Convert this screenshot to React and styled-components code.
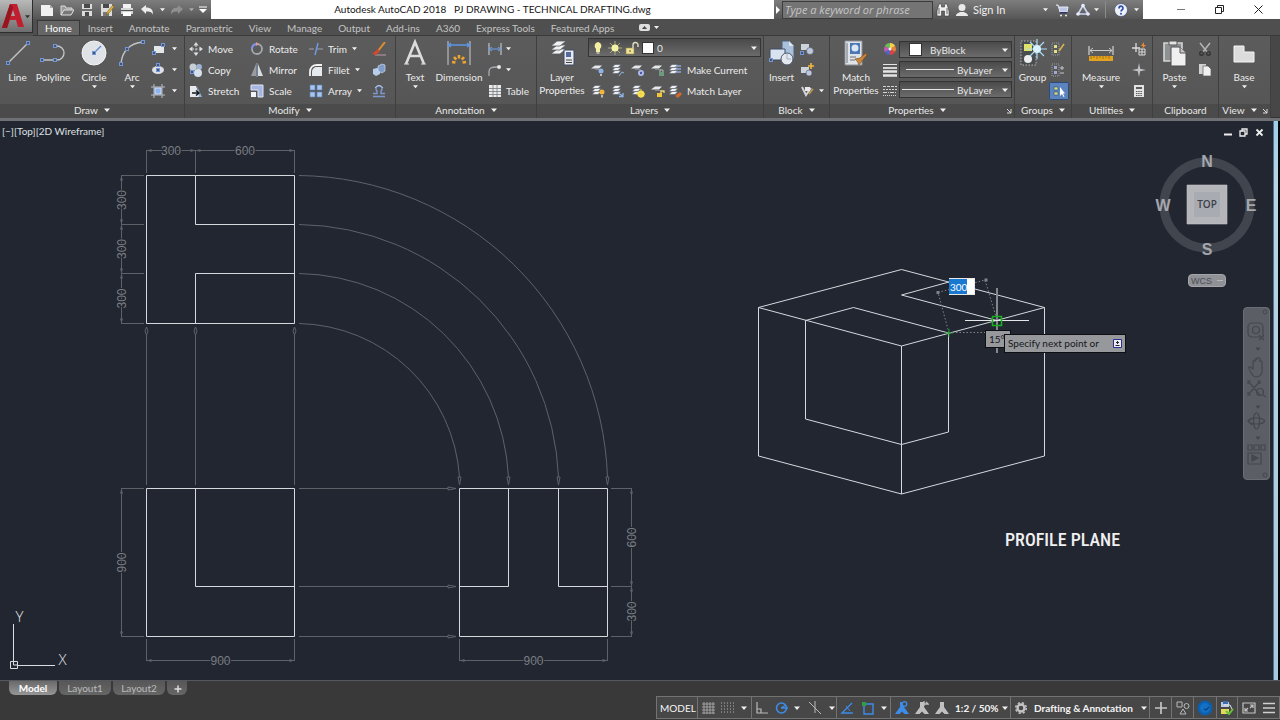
import styled, { createGlobalStyle, css } from 'styled-components'

const GlobalStyle = createGlobalStyle`
  *{box-sizing:border-box;}
  body{margin:0;background:#393939;font-family:Lato,"Open Sans",sans-serif;font-size:10px;color:#e8e8e8;}
  button,input,select{font:inherit;color:inherit;margin:0;padding:0;border:none;background:none;outline:none;}
  svg{display:block;flex:none;}
`

const Page = styled.div`display:flex;flex-direction:column;min-height:100vh;overflow:hidden;`

/* ---------- header ---------- */
const Header = styled.header`display:flex;height:36px;background:#4f4f4f;`
const AppButton = styled.button`
  width:33px;height:33px;display:flex;align-items:center;justify-content:center;gap:1px;
  background:linear-gradient(#b9b9b9,#6e6e6e);border:1px solid #2e2e2e;border-top:none;border-left:none;
`
const HeaderMain = styled.div`flex:1;min-width:0;display:flex;flex-direction:column;`
const TitleBar = styled.div`display:flex;height:19px;background:#fff;`
const QuickAccess = styled.div`
  width:178px;display:flex;align-items:center;padding-left:4px;
  background:linear-gradient(#7d7d7d,#565656);
`
const Title = styled.h1`
  flex:1;margin:0;text-align:center;font-size:10px;line-height:19px;font-weight:400;color:#151515;white-space:pre;
`
const InfoCenter = styled.div`
  display:flex;align-items:center;width:369px;background:linear-gradient(#7d7d7d,#565656);
`
const Search = styled.input`
  width:151px;height:18px;padding:0 2px;background:#747474;border:1px solid #3c3c3c;
  font-family:"Open Sans",sans-serif;font-size:11px;font-style:italic;
  &::placeholder{color:#c6c6c6;opacity:1;}
`
const WindowButtons = styled.div`
  width:137px;display:flex;justify-content:space-between;align-items:center;padding:0 12px 0 28px;
`
const IconButton = styled.button`
  width:${p => p.$w || 20}px;height:${p => p.$h || 19}px;flex:none;
  display:flex;align-items:center;justify-content:center;cursor:pointer;
`
const SignIn = styled.button`text-align:left;width:68px;padding-left:1px;color:#f0f0f0;font-size:11px;`
const Separator = styled.span`width:1px;height:17px;background:#8c8c8c;margin:0 4px;`

const TabRow = styled.nav`
  display:flex;align-items:flex-end;height:17px;padding-left:4px;border-bottom:1px solid #3a3a3a;
`
const Tab = styled.button`
  height:${p => p.$active ? 15 : 14}px;padding:0 8px;line-height:13px;white-space:nowrap;
  color:${p => p.$active ? '#fff' : '#c4c4c4'};
  ${p => p.$active && css`
    background:#666;border:1px solid #383838;border-bottom:none;padding:0 7px;
    border-radius:1px 1px 0 0;
  `}
`

/* ---------- ribbon ---------- */
const Ribbon = styled.div`
  display:flex;height:85px;padding-right:9px;background:#474747;
  border-bottom:3px solid #6e7073;box-shadow:inset 0 -1px #333;
`
const PanelBox = styled.section`
  flex:${p => p.$grow - 1} 1 0;min-width:0;display:flex;flex-direction:column;
  border-right:1px solid #3f3f3f;box-shadow:inset 1px 0 #626262;
`
const PanelBody = styled.div`flex:1;display:flex;padding-top:2px;background:linear-gradient(#5c5c5c,#565656);`
const PanelTitle = styled.button`
  position:relative;height:14px;display:flex;align-items:center;justify-content:center;gap:6px;
  padding:0 ${p => p.$launcher ? 10 : 0}px 2px 0;background:#4b4b4b;color:#e8e8e8;
`
const Launcher = styled.span`position:absolute;right:2px;top:4px;`
const BigButton = styled.button`
  width:${p => p.$w}px;height:64px;flex:none;display:flex;flex-direction:column;align-items:center;
  line-height:13px;color:#ececec;
`
const BigIcon = styled.span`height:33px;padding-top:1px;`
const Column = styled.div`
  width:${p => p.$w}px;flex:none;display:grid;grid-template-rows:repeat(3,21px);
  padding-left:${p => p.$pad || 0}px;
`
const Tool = styled.button`
  display:flex;align-items:center;gap:${p => p.$gap || 5}px;white-space:nowrap;color:#ececec;
  ${p => p.$active && css`
    background:#5b83bd;outline:1px solid #2e4a78;outline-offset:-1px;border-radius:1px;
    width:20px;height:18px;margin:2px 0 0 -2px;justify-content:center;
  `}
`
const LayerTools = styled.div`flex:1;display:grid;grid-template-rows:repeat(3,21px);min-width:0;padding:0 2px 0 1px;`
const ToolRow = styled.div`display:flex;align-items:center;`
const ComboRows = styled.div`flex:1;min-width:0;display:flex;flex-direction:column;gap:3px;padding:3px 2px 0 0;`
const Combo = styled.div`
  min-width:0;height:${p => p.$h || 17}px;flex:none;display:flex;align-items:center;gap:3px;
  padding:0 3px 0 ${p => p.$pad || 2}px;background:linear-gradient(#4a4a4a,#6b6b6b);border:1px solid #343434;
  select{flex:1;min-width:0;appearance:none;}
  option{color:#111;}
`
const Swatch = styled.span`
  width:${p => p.$size}px;height:${p => p.$size}px;flex:none;margin-right:${p => p.$after || 0}px;
  background:#fff;border:1px solid #333;
`
const LineSample = styled.span`width:${p => p.$w}px;height:1px;background:#e6e6e6;`

/* ---------- drawing area ---------- */
const Work = styled.main`flex:1;display:flex;min-height:559px;background:#222630;`
const Canvas = styled.div`position:relative;flex:1;min-width:0;overflow:hidden;`
const Drawing = styled.svg`position:absolute;inset:0;width:100%;height:100%;`
const Edge = styled.div`
  width:7px;border-right:2px solid #05070a;border-left:1px solid #55708a;
  background:linear-gradient(#9ed0ea,#b9d4e4 62px,#a9c9dc);
`
const ViewLabel = styled.div`position:absolute;left:2px;top:4px;line-height:13px;color:#dfe1e4;`
const DocButtons = styled.div`position:absolute;right:6px;top:2px;display:flex;`
const ViewCube = styled.div`position:absolute;right:11px;top:32px;`
const Wcs = styled.button`
  position:absolute;right:47px;top:153px;width:38px;height:13px;border-radius:4px;
  background:#8f9197;border:1px solid #a3a5aa;color:#4b4e55;display:flex;align-items:center;justify-content:center;gap:5px;
  font-family:"Liberation Sans",sans-serif;font-size:9px;
`
const NavBar = styled.div`
  position:absolute;right:3px;top:186px;width:27px;height:173px;border-radius:4px;
  background:#5b5e64;border:1px solid #6a6d73;
`
const LengthInput = styled.input`
  position:absolute;left:949px;top:157px;width:26px;height:17px;padding:0 1px;
  background:linear-gradient(90deg,#1979d1 18px,#fff 18px);color:#fff;border:1px solid #e8e8e8;border-left:none;line-height:14px;
`
const Tip = styled.div`
  position:absolute;display:flex;align-items:center;justify-content:space-between;
  background:#97989b;border:1px solid #0d0f14;color:#15171c;padding:0 3px 1px;
`
const AngleTip = styled(Tip)`left:985px;top:209px;width:26px;height:18px;`
const PromptTip = styled(Tip)`left:1004px;top:213px;width:122px;height:19px;`

/* ---------- bottom ---------- */
const Bottom = styled.footer`display:flex;flex-direction:column;height:40px;background:#393939;border-top:1px solid #55585c;`
const LayoutTabs = styled.div`display:flex;height:15px;padding-left:9px;gap:2px;`
const LayoutTab = styled.button`
  height:14px;width:${p => p.$w}px;line-height:13px;border-radius:0 0 6px 6px;
  background:${p => p.$active ? 'linear-gradient(#6a6a6a,#969696)' : 'linear-gradient(#575757,#666)'};
  color:${p => p.$active ? '#fff' : '#bcbcbc'};font-weight:${p => p.$active ? 700 : 400};
`
const StatusBar = styled.div`
  align-self:flex-end;display:flex;height:23px;background:#474747;border:1px solid #737373;
`
const Cell = styled.div`
  display:flex;align-items:center;border-right:1px solid #737373;
  &:last-child{border:none;}
`
const StatusText = styled.button`
  padding:0 3px;width:${p => p.$w}px;text-align:left;white-space:nowrap;
  font-weight:${p => p.$bold ? 700 : 400};color:#f4f4f4;
`

const Caret = ({ s = 6, c = '#f0f0f0' }) => (
  <svg width={s} height={s} viewBox="0 0 6 6"><path d="M0 1.500h6L3 5z" fill={c} /></svg>
)
const Icon = ({ s = 14, children }) => <svg width={s} height={s} viewBox="0 0 14 14" fill="none">{children}</svg>
const Big = ({ children }) => <svg width="28" height="28" viewBox="0 0 28 28" fill="none">{children}</svg>

// blue grip squares used on the draw tools
const Grip = ({ x, y }) => <rect x={x - 1.5} y={y - 1.5} width="3" height="3" fill="#46556f" stroke="#7396d8" strokeWidth="1" />

const Sheets = ({ x = 0, y = 0 }) => (
  <g transform={`translate(${x} ${y})`}>
    {[6, 3, 0].map(d => (
      <path key={d} d={`M1 ${d + 3.5}L4 ${d + 0.5}h6l-3 3z`} fill="#eceff2" stroke="#555b63" strokeWidth=".6" />
    ))}
  </g>
)

const big = {
  line: <Big><path d="M4 24L24 4" stroke="#bfc2c6" strokeWidth="1.4" /><Grip x={4} y={24} /><Grip x={24} y={4} /></Big>,
  polyline: <Big><path d="M3 21h15a6.500 6.500 0 0 0 0-14h-2" stroke="#bfc2c6" strokeWidth="1.4" /><Grip x={3} y={21} /><Grip x={16} y={21} /><Grip x={16} y={7} /></Big>,
  circle: (
    <Big>
      <circle cx="14" cy="14" r="12" fill="#dfe2e6" stroke="#f4f4f4" />
      <path d="M14 14l7-7" stroke="#5d86d3" strokeWidth="1.2" /><Grip x={14} y={14} />
    </Big>
  ),
  arc: <Big><path d="M3 25C4 12 12 4 25 3" stroke="#bfc2c6" strokeWidth="1.5" /><Grip x={3} y={25} /><Grip x={9} y={10} /><Grip x={25} y={3} /></Big>,
  text: <Big><path d="M5 25L14 3l9 22M8.500 17h11" stroke="#dcdcdc" strokeWidth="2.600" /><path d="M3 25h5M20 25h5" stroke="#dcdcdc" /></Big>,
  dimension: (
    <Big>
      <path d="M3 2v24M25 2v24" stroke="#a8abb0" strokeWidth="1.400" />
      <path d="M3 6h22M6 4L3 6l3 2M22 4l3 2-3 2" stroke="#5f97e6" strokeWidth="1.300" />
      {[[7, 23], [9, 18], [14, 16], [19, 18], [21, 23]].map(([x, y]) => <path key={x} d={`M${x} ${y}L14 24`} stroke="#eda52c" strokeWidth="2.600" strokeDasharray="3.500 9" />)}
    </Big>
  ),
  layers: (
    <Big>
      {[10, 6, 2].map(y => <path key={y} d={`M3 ${y + 5}l6-5h9l-6 5z`} fill="#f0f1f3" stroke="#55585c" strokeWidth=".8" />)}
      <path d="M16 11h10v15H16z" fill="#e7e9ee" stroke="#3f4a63" /><path d="M18 13h5v5h-5z" fill="#54699c" /><path d="M18 21h6M18 23.500h6" stroke="#444" />
    </Big>
  ),
  insert: (
    <Big>
      <path d="M14 2h7l5 5v13H14z" fill="#a9c0dc" stroke="#4c5f78" /><path d="M21 2v5h5" fill="#dde7f2" />
      <path d="M2 10h15v11H2z" fill="#d9e3f0" stroke="#3f4d63" /><circle cx="19" cy="20" r="6" fill="#e4e8ee" stroke="#50586a" />
      <path d="M19 20V15M19 20h4" stroke="#9fb0c8" /><Grip x={3} y={21} />
    </Big>
  ),
  match: (
    <Big>
      <path d="M3 2h17v24H3z" fill="#dfe3e8" stroke="#8a8f96" /><path d="M8 4h10v11H8z" fill="#4a78b5" /><circle cx="13" cy="9" r="3.500" fill="#dbe6f3" />
      <path d="M5 4v20M8 18h6M8 21h5" stroke="#6d7178" /><path d="M13 20l5-1 6-5 1 2-5 6-3 4c-1-3-2-4-4-6z" fill="#c8873d" stroke="#774313" strokeWidth=".6" />
    </Big>
  ),
  group: (
    <Big>
      <path d="M2 2h15v24H2z" stroke="#b2b5b8" strokeDasharray="1.500 1.500" fill="#4a4d50" />
      <rect x="5" y="5" width="8" height="7" fill="#dfe36d" /><circle cx="9" cy="20" r="4" fill="#eceef0" />
      <path d="M18 0v20M8 10h20M11 3l14 14M25 3L11 17" stroke="#a8dcf7" strokeWidth="1.200" /><circle cx="18" cy="10" r="4" fill="#d8f3ff" />
    </Big>
  ),
  measure: (
    <Big>
      <path d="M2 7v9M26 7v9" stroke="#c9c9c9" strokeWidth="1.300" /><path d="M3 11.500h22M6 9l-3 2.500L6 14M22 9l3 2.500-3 2.500" stroke="#c9c9c9" />
      <path d="M2 17h24v5H2z" fill="#e3a220" /><path d="M4 17v3M7 17v2M10 17v3M13 17v2M16 17v3M19 17v2M22 17v3" stroke="#8a5b08" strokeWidth=".7" />
    </Big>
  ),
  paste: (
    <Big>
      <path d="M3 4h18v18H3z" fill="#8e9194" stroke="#d5d5d5" strokeWidth="1.600" /><path d="M8 2h8v4H8z" fill="#e2e2e2" stroke="#555" />
      <path d="M10 8h9l6 6v13H10z" fill="#efefef" stroke="#4d4d4d" /><path d="M19 8v6h6" fill="#c7c7c7" stroke="#555" />
    </Big>
  ),
  base: <Big><path d="M4 7h10v6h10v10H4z" fill="#dcdcdc" stroke="#f6f6f6" /></Big>,
}

const LayerIcon = ({ children }) => (
  <Icon><path d="M0 5.500L4 2.500h7l-3 3z" fill="#e6e8eb" /><path d="M4 6.500h6" stroke="#80858c" />{children}</Icon>
)
const StackIcon = ({ children }) => <Icon><Sheets y={1} />{children}</Icon>

const small = {
  rect: <Icon><path d="M3 4h10v7H3z" fill="#e4e7ea" /><Grip x={3} y={11} /><Grip x={12} y={3} /></Icon>,
  ellipse: <Icon><ellipse cx="7" cy="7" rx="6" ry="4" fill="#e0dfe6" /><Grip x={7} y={7} /><Grip x={7} y={2} /></Icon>,
  hatch: <Icon><path d="M3 0v14M11 0v14M0 3h14M0 11h14" stroke="#b6bcc6" /><path d="M4 4h6v6H4z" fill="#8fb3f0" stroke="#d4e2fa" /></Icon>,
  move: <Icon><path d="M7 0l2.500 3.500h-5zM7 14l2.500-3.500h-5zM0 7l3.500-2.500v5zM14 7l-3.500-2.500v5z" fill="#dcdfe2" /><path d="M7 3v8M3 7h8" stroke="#b6b9bd" strokeWidth="1.500" strokeDasharray="2 1.500" /></Icon>,
  copy: <Icon><circle cx="4" cy="4" r="3.500" fill="#c8ced6" /><circle cx="10" cy="4" r="3" fill="#9eb4d0" /><circle cx="9" cy="10" r="4" fill="#d6e0ec" /><Grip x={3} y={9} /></Icon>,
  stretch: <Icon><path d="M1 13V2h6l4 11z" fill="#e6eaee" /><path d="M8 2l5 11h-3z" fill="#8fb0d9" /><path d="M3 9h7M7 6.500L10 9l-3 2.500" stroke="#16191e" strokeWidth="1.500" /></Icon>,
  rotate: <Icon><circle cx="7" cy="7" r="5" stroke="#a5a9ae" strokeWidth="1.800" /><path d="M2 7a5 5 0 0 1 4-5" stroke="#7f8ff0" strokeWidth="1.800" /><path d="M6 0l3 2-3 2z" fill="#d99" /></Icon>,
  mirror: <Icon><path d="M6 1v12H1z" fill="#989ca1" /><path d="M8 1v12h5z" fill="#d9dce0" /><path d="M7 0v14" stroke="#8fa6c4" /></Icon>,
  scale: <Icon><path d="M1 1h12v12H8V6H1z" fill="#a6b6e0" stroke="#dfe6f8" /><path d="M1 8h5v5H1z" fill="#f0f3fa" /></Icon>,
  trim: <Icon><path d="M0 7h5M8 7h6" stroke="#9aa0a8" strokeWidth="1.200" /><path d="M6 13L9 1" stroke="#6f9be8" strokeWidth="1.400" /></Icon>,
  fillet: <Icon><path d="M1 13V9c0-5 3-7 7-7h5" stroke="#f4f4f4" strokeWidth="1.800" /><path d="M3 13V9c0-3 2-5 5-5h5v9z" fill="#e8ebee" /></Icon>,
  array: <Icon><path d="M1 1h5v5H1zM8 1h5v5H8zM1 8h5v5H1zM8 8h5v5H8z" fill="#a5c4ef" stroke="#5d7fb5" strokeWidth=".6" /></Icon>,
  erase: <Icon><path d="M3 13h11" stroke="#b9a" /><path d="M13 0L6 9" stroke="#dc8f2d" strokeWidth="2" /><path d="M6 7l2 2-4 4-4-1z" fill="#d34a2a" /></Icon>,
  explode: <Icon><path d="M1 6l4-1 3 1v5l-4 2-3-2z" fill="#b7cdea" /><path d="M6 3l4-2 3 1v6l-3 2-4-2z" fill="#7f9dc8" stroke="#dce7f5" strokeWidth=".6" /></Icon>,
  offset: <Icon><path d="M1 12.500h12M1 9.500h4V7a3 3 0 1 1 4 0v2.500h4" stroke="#7e97cd" strokeWidth="1.500" /><path d="M3 4a4.500 4.500 0 0 1 8 0" stroke="#b7c5e6" /></Icon>,
  dimLinear: <Icon><path d="M1 1v12M13 1v12" stroke="#b6babf" strokeWidth="1.300" /><path d="M1 7h12M4 5L1 7l3 2M10 5l3 2-3 2" stroke="#6fa0ea" /></Icon>,
  leader: <Icon><path d="M1 13V9c0-4 2-5 8-5" stroke="#a9adb2" strokeWidth="1.300" /><circle cx="11" cy="4" r="2" fill="#e8e8e8" /></Icon>,
  table: <Icon><path d="M1 1h12v12H1z" fill="#e8eaec" /><path d="M1 4.500h12M1 7.500h12M1 10.500h12M5 1v12M9 1v12" stroke="#777c82" strokeWidth=".8" /></Icon>,
  bulb: <Icon><path d="M7 1a4 4 0 0 0-2 7v3h4V8a4 4 0 0 0-2-7z" fill="#f5efa0" /><path d="M5.500 12h3" stroke="#ccc" strokeWidth="1.500" /></Icon>,
  sun: <Icon><path d="M7 0v14M0 7h14M2 2l10 10M12 2L2 12" stroke="#bfbf86" strokeWidth=".8" /><circle cx="7" cy="7" r="3.500" fill="#f4f2a5" /></Icon>,
  lock: <Icon><path d="M1 7h8v6H1z" fill="#f0e39a" stroke="#9b8c3f" strokeWidth=".6" /><path d="M8 7V4a2.500 2.500 0 0 1 5 0v2" stroke="#e0dcc0" strokeWidth="1.400" /><path d="M5 9v2" stroke="#5e541f" /></Icon>,
  layOff: <LayerIcon><circle cx="10" cy="8" r="2.500" fill="#8fb4e6" /><path d="M10 11v2" stroke="#dfe3e8" strokeWidth="1.500" /></LayerIcon>,
  layIso: <StackIcon><path d="M8 13l3-4 2 1" stroke="#8fb4e6" /></StackIcon>,
  layFreeze: <LayerIcon><circle cx="10" cy="10" r="3" fill="#aebcf0" /><circle cx="10" cy="10" r="1.200" fill="#4c5c9a" /></LayerIcon>,
  layLock: <LayerIcon><path d="M8 9h5v4H8z" fill="#6e9a7d" /><path d="M9 9V7h3v2" stroke="#a5c1b0" /></LayerIcon>,
  makeCurrent: <StackIcon><path d="M8 3h5M8 6h5M8 9h5" stroke="#8fa9dd" strokeWidth="1.500" /></StackIcon>,
  layOn: <StackIcon><circle cx="11" cy="8" r="2.500" fill="#f3b73c" /><path d="M11 11v2.500" stroke="#eee" strokeWidth="1.300" /></StackIcon>,
  layUniso: <StackIcon><path d="M7 9l5 3M12 9v3.500H8" stroke="#8fb4e6" strokeWidth="1.300" /></StackIcon>,
  layThaw: <StackIcon><circle cx="10" cy="10" r="3.500" fill="#f7e35c" /><path d="M10 5v10M5 10h10" stroke="#f1cf3e" /></StackIcon>,
  layUnlock: <LayerIcon><path d="M6 9h5v4H6z" fill="#f0c63a" /><path d="M10 9V7h3v2" stroke="#f0d97a" strokeWidth="1.300" /></LayerIcon>,
  matchLayer: <StackIcon><path d="M7 12l5-4 2 2-4 4z" fill="#d06b2c" /></StackIcon>,
  blockCreate: <Icon><path d="M1 2h8v6H1z" fill="#cdd3db" /><circle cx="10" cy="9" r="3.500" fill="#bcc9dc" stroke="#4f5867" strokeWidth=".6" /><Grip x={2} y={11} /></Icon>,
  blockEdit: <Icon><path d="M1 4h8v6H1z" fill="#cdd3db" /><circle cx="9" cy="10" r="3" fill="#bcc9dc" stroke="#4f5867" strokeWidth=".6" /><path d="M11 0v6M8 3h6" stroke="#f3b73c" strokeWidth="1.600" /></Icon>,
  blockAttr: <Icon><path d="M2 3l4 8 5-7" stroke="#cfd3d8" strokeWidth="2" /><path d="M5 3h5v4H5z" fill="#e9ebee" /><path d="M9 10l4-5" stroke="#c79a45" strokeWidth="1.500" /></Icon>,
  wheel: (
    <Icon>
      <path d="M7 7V1a6 6 0 0 1 5.200 3z" fill="#f4d24a" /><path d="M7 7l5.200-3a6 6 0 0 1 0 6z" fill="#e8813b" /><path d="M7 7l5.200 3A6 6 0 0 1 7 13z" fill="#d2463f" />
      <path d="M7 7v6a6 6 0 0 1-5.200-3z" fill="#5560c8" /><path d="M7 7l-5.200 3a6 6 0 0 1 0-6z" fill="#c05ab8" /><path d="M7 7L1.800 4A6 6 0 0 1 7 1z" fill="#6dbd58" />
      <circle cx="7" cy="7" r="1.500" fill="#eee" />
    </Icon>
  ),
  weights: <Icon><path d="M0 1.500h14" stroke="#e4e4e4" /><path d="M0 5h14" stroke="#e4e4e4" strokeWidth="1.800" /><path d="M0 8.500h14M0 12.500h14" stroke="#e4e4e4" strokeWidth="2.300" /></Icon>,
  types: <Icon><path d="M0 2.500h14" stroke="#d4d4d4" strokeDasharray="3 1" /><path d="M0 5.500h14" stroke="#d4d4d4" strokeDasharray="2 1" /><path d="M0 8.500h14" stroke="#d4d4d4" strokeDasharray="4 1 1 1" /><path d="M0 11.500h14" stroke="#d4d4d4" strokeDasharray="1 1" /></Icon>,
  groupEdit: <Icon><path d="M1 1h7v12H1z" stroke="#9b9ea2" strokeDasharray="1 1" /><path d="M3 3h3v3H3zM3 8h3v3H3z" fill="#e2e08a" /><path d="M13 2L8 9" stroke="#d9b24c" strokeWidth="1.600" /></Icon>,
  ungroup: <Icon><path d="M1 1h7v12H1z" stroke="#9b9ea2" strokeDasharray="1 1" /><path d="M3 3h3v3H3zM3 8h3v3H3z" fill="#9fa9d4" /><path d="M9 5h4M11 3v4M9 10h4" stroke="#c4c6c9" /></Icon>,
  groupPick: <Icon><path d="M2 3h4v3H2zM2 8h4v3H2z" fill="#cfe07d" stroke="#334a7d" strokeWidth=".6" /><path d="M8 3v9l2-2 1.500 3 1-.500-1.500-3H13z" fill="#fff" /></Icon>,
  quickSel: <Icon><path d="M4 1v9M0 6h8" stroke="#dcdcdc" strokeWidth="1.300" /><path d="M7 7h6v6H7zM10 7v6M7 10h6" stroke="#dcdcdc" /><path d="M12 0L9 4h2l-1 3 4-4h-2z" fill="#f08a2c" /></Icon>,
  point: <Icon><path d="M7 0l1.200 5.800L14 7 8.200 8.200 7 14 5.800 8.200 0 7l5.800-1.200z" fill="#c0c2c5" /></Icon>,
  calc: <Icon><path d="M2 1h10v12H2z" fill="#e3e3e3" /><path d="M4 3h6v2H4z" fill="#5c5c5c" /><path d="M4 7.500h6M4 9.500h6M4 11.500h6" stroke="#5c5c5c" strokeDasharray="1.500 .7" /></Icon>,
  cut: <Icon><path d="M2 1l8 10M12 1L4 11" stroke="#b3b5b8" strokeWidth="1.500" /><circle cx="3.500" cy="11.500" r="1.800" stroke="#353535" strokeWidth="1.500" /><circle cx="10.500" cy="11.500" r="1.800" stroke="#353535" strokeWidth="1.500" /></Icon>,
  copyClip: <Icon><path d="M1 1h7v10H1z" fill="#d2d2d2" /><path d="M5 3h5l3 3v7H5z" fill="#f0f0f0" stroke="#5b5b5b" strokeWidth=".7" /></Icon>,
}

const quick = {
  newFile: <Icon><path d="M1 2h9l3 3v8H1z" fill="#f0f0f0" /><path d="M10 2v3h3" fill="#aaa" /></Icon>,
  open: <Icon><path d="M1 12V3h4l1 2h6v2" fill="#999" stroke="#ddd" /><path d="M1 12l3-5h10l-3 5z" fill="#777" stroke="#e0e0e0" /></Icon>,
  save: <Icon><path d="M2 1h10v12H2z" fill="#dcdcdc" /><path d="M4 1h6v4H4z" fill="#4a4a4a" /><path d="M2 7h10" stroke="#4a4a4a" strokeWidth="1.500" /><path d="M5 9h4v4H5z" fill="#4a4a4a" /></Icon>,
  saveAs: <Icon><path d="M1 1h11v12H1z" fill="#dcdcdc" /><path d="M3 1h6v4H3z" fill="#4a4a4a" /><path d="M3 9h6v4H3z" fill="#777" /><path d="M13 2L7 9l-1 3 3-2 5-6z" fill="#dfb23b" stroke="#6d5412" strokeWidth=".5" /></Icon>,
  print: <Icon><path d="M3 1h8v4H3z" fill="#f2f2f2" /><path d="M1 5h12v6H1z" fill="#d5d5d5" /><path d="M1 7.500h12" stroke="#555" /><path d="M3 9h8v4H3z" fill="#fff" /></Icon>,
  undo: <Icon><path d="M1 6l5-4v2.500c5 0 7 2 7 7-2-3-3-3-7-3V11z" fill="#ececec" /></Icon>,
  redo: <Icon><path d="M13 6L8 2v2.500c-5 0-7 2-7 7 2-3 3-3 7-3V11z" fill="#909090" /></Icon>,
  binoculars: <Icon><path d="M3 1h2.500v3h3V1H11l2 7v5H8.500V8h-3v5H1V8z" fill="#eee" stroke="#3c3c3c" strokeWidth=".6" /><path d="M3 5v6M11 5v6" stroke="#666" /></Icon>,
  user: <Icon><circle cx="7" cy="4.500" r="3.500" fill="#e9e9e9" /><path d="M1 13c0-3 3-3 4-4h4c1 1 4 1 4 4z" fill="#e9e9e9" /></Icon>,
  cart: <Icon><path d="M1 2h2l2 7h7l1-5H4" fill="#bcc6e8" stroke="#e7e9f4" /><path d="M5 9h7v1.500H5z" fill="#2c3563" /><circle cx="6" cy="12.500" r="1" fill="#eee" /><circle cx="11" cy="12.500" r="1" fill="#eee" /></Icon>,
  exchange: <Icon><path d="M7 2.500L12 11H2z" stroke="#cdd5f2" strokeWidth="1.700" /><circle cx="7" cy="2.500" r="1.800" fill="#e6eafa" /><circle cx="2" cy="11" r="1.800" fill="#e6eafa" /><circle cx="12" cy="11" r="1.800" fill="#e6eafa" /></Icon>,
  help: <Icon><circle cx="7" cy="7" r="6.500" fill="#eef1f6" stroke="#33436e" strokeWidth=".6" /><path d="M5 5.500C5 2.500 9 2.500 9 5.200 9 6.800 7 7 7 8.600" stroke="#2b4fa8" strokeWidth="1.700" /><circle cx="7" cy="10.800" r="1" fill="#2b4fa8" /></Icon>,
}

const iconButton = (key, icon, w) => <IconButton key={key} $w={w} aria-label={key}>{icon}</IconButton>

const Panel = ({ title, grow, caret = true, launcher, children }) => (
  <PanelBox $grow={grow}>
    <PanelBody>{children}</PanelBody>
    <PanelTitle $launcher={launcher}>
      {title} {caret && <Caret />}
      {launcher && <Launcher><svg width="6" height="6" viewBox="0 0 6 6"><path d="M1 1l4 4M5 1v4H1" stroke="#ddd" fill="none" /></svg></Launcher>}
    </PanelTitle>
  </PanelBox>
)

const BigTool = ({ w, icon, label, caret }) => (
  <BigButton $w={w}>
    <BigIcon>{big[icon]}</BigIcon>
    {label.split('\n').map(l => <span key={l}>{l}</span>)}
    {caret && <Caret s={5} />}
  </BigButton>
)

// rows: [icon, label, hasCaret, active]
const ToolColumn = ({ w, pad, gap, rows }) => (
  <Column $w={w} $pad={pad}>
    {rows.map(([icon, label, caret, active]) => (
      <Tool key={icon} $gap={gap} $active={active} aria-label={label || icon}>
        {small[icon]}{label}{caret && <Caret s={5} />}
      </Tool>
    ))}
  </Column>
)

const TABS = ['Home', 'Insert', 'Annotate', 'Parametric', 'View', 'Manage', 'Output', 'Add-ins', 'A360', 'Express Tools', 'Featured Apps']

const Top = () => (
  <Header>
    <AppButton aria-label="Application menu">
      <svg width="22" height="26" viewBox="0 0 22 26">
        <path d="M8 1h7l7 23h-6l-2-7H8l-3 8H0z" fill="#c11f2f" /><path d="M11 7l2 6H9z" fill="#a9a0a0" /><path d="M0 25L8 1l3 3-6 21z" fill="#96151f" />
      </svg>
      <Caret s={5} c="#333" />
    </AppButton>
    <HeaderMain>
      <TitleBar>
        <QuickAccess>
          {['newFile', 'open', 'save', 'saveAs', 'print', 'undo'].map(k => iconButton(k, quick[k], 20))}
          {iconButton('undo list', <Caret s={5} />, 10)}
          {iconButton('redo', quick.redo, 20)}
          {iconButton('redo list', <Caret s={5} c="#aaa" />, 9)}
          {iconButton('customize', <svg width="8" height="8" viewBox="0 0 8 8"><path d="M0 1h8" stroke="#fff" /><path d="M0 3h8L4 7z" fill="#fff" /></svg>, 14)}
        </QuickAccess>
        <Title>{'Autodesk AutoCAD 2018   PJ DRAWING - TECHNICAL DRAFTING.dwg'}</Title>
        <InfoCenter>
          {iconButton('collapse', <svg width="4" height="8" viewBox="0 0 4 8"><path d="M0 0l4 4-4 4z" fill="#fff" /></svg>, 8)}
          <Search placeholder="Type a keyword or phrase" aria-label="Search" />
          {iconButton('search', quick.binoculars, 19)}
          {iconButton('account', quick.user, 20)}
          <SignIn>Sign In</SignIn>
          {iconButton('account list', <Caret s={5} />, 10)}
          {iconButton('cart', quick.cart, 24)}
          {iconButton('exchange', quick.exchange, 18)}
          {iconButton('exchange list', <Caret s={5} />, 9)}
          <Separator />
          {iconButton('help', quick.help, 22)}
          {iconButton('help list', <Caret s={5} />, 9)}
        </InfoCenter>
        <WindowButtons>
          {iconButton('minimize', <svg width="9" height="9"><path d="M0 4.500h8" stroke="#777" /></svg>)}
          {iconButton('restore', <svg width="9" height="9" fill="none" stroke="#222"><path d="M.5 2.500h6v6h-6zM2.500 2.500v-2h6v6h-2" /></svg>)}
          {iconButton('close', <svg width="9" height="9" stroke="#222"><path d="M.5.5l8 8M8.500.5l-8 8" /></svg>)}
        </WindowButtons>
      </TitleBar>
      <TabRow>
        {TABS.map((t, i) => <Tab key={t} $active={i === 0}>{t}</Tab>)}
        <Tab aria-label="Minimize ribbon">
          <svg width="30" height="12" viewBox="0 0 30 12">
            <rect x="9" y="2" width="11" height="7" rx="2" fill="#ddd" /><path d="M12 7l2.500-3L17 7z" fill="#444" /><path d="M24 4h5l-2.500 3z" fill="#f0f0f0" />
          </svg>
        </Tab>
      </TabRow>
    </HeaderMain>
  </Header>
)

const RibbonBar = () => (
  <Ribbon>
    <Panel title="Draw" grow={185}>
      <BigTool w={35} icon="line" label="Line" />
      <BigTool w={36} icon="polyline" label="Polyline" />
      <BigTool w={46} icon="circle" label="Circle" caret />
      <BigTool w={30} icon="arc" label="Arc" caret />
      <ToolColumn w={34} pad={4} gap={7} rows={[['rect', '', true], ['ellipse', '', true], ['hatch', '', true]]} />
    </Panel>
    <Panel title="Modify" grow={211}>
      <ToolColumn w={64} pad={4} rows={[['move', 'Move'], ['copy', 'Copy'], ['stretch', 'Stretch']]} />
      <ToolColumn w={60} pad={1} rows={[['rotate', 'Rotate'], ['mirror', 'Mirror'], ['scale', 'Scale']]} />
      <ToolColumn w={62} rows={[['trim', 'Trim', true], ['fillet', 'Fillet', true], ['array', 'Array', true]]} />
      <ToolColumn w={20} pad={1} rows={[['erase'], ['explode'], ['offset']]} />
    </Panel>
    <Panel title="Annotation" grow={141}>
      <BigTool w={38} icon="text" label="Text" caret />
      <BigTool w={50} icon="dimension" label="Dimension" />
      <ToolColumn w={50} pad={4} gap={4} rows={[['dimLinear', '', true], ['leader', '', true], ['table', 'Table']]} />
    </Panel>
    <Panel title="Layers" grow={227}>
      <BigTool w={50} icon="layers" label={'Layer\nProperties'} />
      <LayerTools>
        <Combo $h={19}>
          {small.bulb}{small.sun}{small.lock}<Swatch $size={12} />
          <select aria-label="Layer"><option>0</option></select>
          <Caret />
        </Combo>
        {[
          [['layOff', 'layIso', 'layFreeze', 'layLock'], 'makeCurrent', 'Make Current'],
          [['layOn', 'layUniso', 'layThaw', 'layUnlock'], 'matchLayer', 'Match Layer'],
        ].map(([keys, last, label]) => (
          <ToolRow key={last}>
            {keys.map(k => iconButton(k, small[k], 20))}
            <Tool>{small[last]}{label}</Tool>
          </ToolRow>
        ))}
      </LayerTools>
    </Panel>
    <Panel title="Block" grow={66}>
      <BigTool w={35} icon="insert" label="Insert" />
      <ToolColumn w={29} pad={1} gap={5} rows={[['blockCreate'], ['blockEdit'], ['blockAttr', '', true]]} />
    </Panel>
    <Panel title="Properties" grow={185} launcher>
      <BigTool w={52} icon="match" label={'Match\nProperties'} />
      <ToolColumn w={17} pad={1} rows={[['wheel'], ['weights'], ['types']]} />
      <ComboRows>
        <Combo $pad={9}><Swatch $size={13} $after={5} /><select aria-label="Object color"><option>ByBlock</option></select><Caret /></Combo>
        <Combo $pad={6}><LineSample $w={48} /><select aria-label="Lineweight"><option>ByLayer</option></select><Caret /></Combo>
        <Combo $pad={2}><LineSample $w={52} /><select aria-label="Linetype"><option>ByLayer</option></select><Caret /></Combo>
      </ComboRows>
    </Panel>
    <Panel title="Groups" grow={57}>
      <BigTool w={35} icon="group" label="Group" />
      <ToolColumn w={21} pad={1} rows={[['groupEdit'], ['ungroup'], ['groupPick', '', false, true]]} />
    </Panel>
    <Panel title="Utilities" grow={81}>
      <BigTool w={58} icon="measure" label="Measure" caret />
      <ToolColumn w={22} pad={2} rows={[['quickSel'], ['point'], ['calc']]} />
    </Panel>
    <Panel title="Clipboard" grow={66} caret={false}>
      <BigTool w={43} icon="paste" label="Paste" caret />
      <ToolColumn w={22} pad={2} rows={[['cut'], ['copyClip']]} />
    </Panel>
    <Panel title="View" grow={52} launcher>
      <BigTool w={50} icon="base" label="Base" caret />
    </Panel>
  </Ribbon>
)

const DIM = '#5d6269'
const DimText = ({ x, y, turned, children }) => (
  <text
    x={x} y={y} dy="4.300" textAnchor="middle" fill="#7a7e84" stroke="#222630" strokeWidth="2" paintOrder="stroke"
    fontFamily="Liberation Sans, sans-serif" fontSize="12" transform={turned ? `rotate(-90 ${x} ${y})` : undefined}
  >{children}</text>
)

// filled tick arrows at both ends of a dimension line
const DimH = ({ x1, x2, y, children }) => (
  <g>
    <path d={`M${x1} ${y}H${x2}`} stroke={DIM} />
    <path d={`M${x1} ${y}l5-1.500v3zM${x2} ${y}l-5-1.500v3z`} fill={DIM} />
    <DimText x={(x1 + x2) / 2} y={y}>{children}</DimText>
  </g>
)
const DimV = ({ x, y1, y2, children }) => (
  <g>
    <path d={`M${x} ${y1}V${y2}`} stroke={DIM} />
    <path d={`M${x} ${y1}l-1.500 5h3zM${x} ${y2}l-1.500-5h3z`} fill={DIM} />
    <DimText x={x} y={(y1 + y2) / 2} turned>{children}</DimText>
  </g>
)

const ARCS = [[175.5, 607.5], [224.5, 558.5], [273.5, 508.5], [323.5, 459.5]]

const Plan = () => (
  <Drawing>
    <g transform="translate(0 -121)" fill="none">
      <g stroke={DIM}>
        <path d="M146.500 150v23M195.500 150v23M294.500 150v23" />
        <path d="M121 175.500h23M121 224.500h23M121 273.500h23M121 323.500h23" />
        <path d="M121 488.500h23M121 636.500h23M146.500 639v22M294.500 639v22" />
        <path d="M459.500 639v22M607.500 639v22M611 488.500h21M611 586.500h21M611 636.500h21" />
        {[146.5, 195.5, 294.5].map(x => <path key={x} d={`M${x} 335V485M${x} 327l-1.500 4 1.500 4 1.500-4z`} />)}
        {[488.5, 586.5, 636.5].map(y => <path key={y} d={`M299 ${y}H448M456 ${y}l-8-1.500v3z`} />)}
        {ARCS.map(([y, x]) => (
          <path key={x} d={`M299 ${y}A${x - 295} ${488 - y} 0 0 1 ${x} 477M${x} 485l-1.500-8h3z`} />
        ))}
      </g>
      <DimH x1={146.5} x2={195.5} y={150.5}>300</DimH>
      <DimH x1={195.5} x2={294.5} y={150.5}>600</DimH>
      <DimV x={121.5} y1={175.5} y2={224.5}>300</DimV>
      <DimV x={121.5} y1={224.5} y2={273.5}>300</DimV>
      <DimV x={121.5} y1={273.5} y2={323.5}>300</DimV>
      <DimV x={121.5} y1={488.5} y2={636.5}>900</DimV>
      <DimH x1={146.5} x2={294.5} y={660.5}>900</DimH>
      <DimH x1={459.5} x2={607.5} y={660.5}>900</DimH>
      <DimV x={631.5} y1={488.5} y2={586.5}>600</DimV>
      <DimV x={631.5} y1={586.5} y2={636.5}>300</DimV>

      <g stroke="#d5d9de">
        <path d="M146.500 175.500h148v148h-148zM195.500 175.500v49h99M294.500 273.500h-99v50" />
        <path d="M146.500 488.500h148v148h-148zM195.500 488.500v98h99" />
        <path d="M459.500 488.500h148v148h-148zM508.500 488.500v98h-49M558.500 488.500v98h49" />
        <path d="M901.500 269.500L1044.500 307.500V456L901.500 494L758.500 456V307.500z" />
        <path d="M758.500 307.500L901.500 346L1044.500 307.500M901.500 346V494" />
        <path d="M805.500 419V320.500L853.500 307.500L948.500 333V432L901.500 444.500L805.500 419z" />
        <path d="M949 282L901.500 295L997 320.500" />
      </g>

      <path d="M949 333L938 292.500L985 280L997 320M949 332.500H990" stroke="#7f848b" strokeDasharray="1.500 2" />
      <path d="M936.500 291h3v3h-3zM984.500 278.500h3v3h-3z" fill="#7f848b" />
      <path d="M945 333h8M949 329v8" stroke="#1f9a2a" />
      <path d="M997 288v65" stroke="#83868b" strokeWidth="2" />
      <path d="M965 320.500h64" stroke="#e4e6e8" />
      <path d="M992.500 316.500h9v9h-9z" stroke="#18b020" strokeWidth="1.600" />

      <text x="1005" y="546" fill="#f0f0f0" fontFamily="Roboto Condensed, Open Sans Condensed, Liberation Sans, sans-serif" fontWeight="500" fontSize="18">PROFILE PLANE</text>

      <path d="M13.500 624v37M17 665.500h38M10.500 661.500h7v7h-7zM13.500 661v4h4" stroke="#d9dce0" />
      <g fill="#e2e4e8" fontFamily="Open Sans, sans-serif" fontWeight="300" fontSize="15">
        <text x="19.500" y="622" textAnchor="middle">Y</text>
        <text x="62.500" y="665" textAnchor="middle">X</text>
      </g>
    </g>
  </Drawing>
)

const Cube = () => (
  <ViewCube>
    <svg width="110" height="106" viewBox="-4 -2 110 106" fontFamily="Liberation Sans, sans-serif" fontWeight="700" textAnchor="middle">
      <circle cx="51" cy="50" r="43" fill="none" stroke="#41454e" strokeWidth="9" />
      <path d="M31 30h40v39H31z" fill="#b4b5b8" stroke="#c3c4c6" strokeWidth=".6" /><path d="M38 37h26v25H38z" fill="#a9abb2" />
      <text x="51" y="53" fontSize="10" fontFamily="Open Sans, sans-serif" fontWeight="600" fill="#3b3e46">TOP</text>
      <g fill="#a5a7ad" fontSize="16">
        <text x="51" y="12">N</text><text x="7" y="56">W</text><text x="95" y="56">E</text><text x="51" y="100">S</text>
      </g>
    </svg>
  </ViewCube>
)

const Navigation = () => (
  <NavBar role="toolbar" aria-label="Navigation bar">
    <svg width="25" height="171" viewBox="0 0 25 171" fill="none" stroke="#44474d" strokeWidth="1.200">
      <circle cx="21" cy="4" r="2" strokeWidth="1" />
      <path d="M19 29H8a4 4 0 0 1-4-4v-6a4 4 0 0 1 4-4h7a4 4 0 0 1 4 4v10zM15 27l5 5M20 27l-5 5" /><circle cx="12" cy="22" r="3.500" />
      <path d="M12.500 40h3l-1.500 2z" fill="#44474d" />
      <path d="M8 66c-2-3-4-6-3-7 2-1 3 2 4 2V54c0-2 2-2 2 0v-2c0-2 2-2 2 0v-1c0-2 3-2 3 0v3c0-2 3-1 2 1v8c0 4-3 6-6 6s-3-2-4-3z" />
      <path d="M4 73l12 14M16 73L4 87M4 76v-3h3M13 73h3v3M4 84v3h3" /><circle cx="16" cy="84" r="3.500" /><path d="M19 87l3 2" />
      <path d="M12.500 98h3l-1.500 2z" fill="#44474d" />
      <ellipse cx="12.500" cy="113" rx="3" ry="8" /><ellipse cx="12.500" cy="113" rx="8" ry="3" /><path d="M8 110l-4 3 4 4" />
      <path d="M12.500 129h3l-1.500 2z" fill="#44474d" />
      <path d="M4 137h4v5H4zM10 137h5v5h-5zM17 137h4v5h-4zM4 145h13v11H4z" /><path d="M8 147v6l6-3z" fill="#44474d" />
      <circle cx="21" cy="167" r="2" strokeWidth="1" />
    </svg>
  </NavBar>
)

const BLUE = '#3d8ce8'
const status = {
  grid: <Icon><path d="M3 1v12M6 1v12M9 1v12M12 1v12M1 3h13M1 6h13M1 9h13M1 12h13" stroke="#a9a9a9" strokeWidth=".9" /></Icon>,
  snap: <Icon><path d="M1 2h13M1 5h13M1 8h13M1 11h13" stroke="#b5b5b5" strokeDasharray="1 2" /></Icon>,
  ortho: <Icon><path d="M2 1v11h11M2 8h4v4" stroke="#b9b9b9" strokeWidth="1.200" /></Icon>,
  polar: <Icon><circle cx="6.500" cy="7" r="5" stroke={BLUE} strokeWidth="1.600" /><path d="M6 7h7M6 7l5-3" stroke={BLUE} strokeWidth="1.400" /></Icon>,
  iso: <Icon><path d="M1 1l12 12" stroke="#b9b9b9" /><path d="M7 0v12" stroke="#b9b9b9" /></Icon>,
  track: <Icon><path d="M12 2L2 12h11" stroke={BLUE} strokeWidth="1.400" /><path d="M6 5l4 5" stroke={BLUE} /></Icon>,
  osnap: <Icon><path d="M3 3h9v10H3z" stroke={BLUE} strokeWidth="1.400" /><path d="M1 1h4v4H1z" fill="#2ea043" /></Icon>,
  gear: <Icon><circle cx="7" cy="7" r="3.500" stroke="#c4c4c4" strokeWidth="2.400" /><circle cx="7" cy="7" r="5.300" stroke="#c4c4c4" strokeWidth="1.500" strokeDasharray="2.200 2" /></Icon>,
  plus: <Icon><path d="M7 1v12M1 7h12" stroke="#c4c4c4" strokeWidth="1.700" /></Icon>,
  isolate: <Icon><path d="M1 1h5v5H1zM4 13l3-5 3 5z" stroke="#b9b9b9" /><circle cx="10.500" cy="5" r="2.500" stroke="#b9b9b9" /></Icon>,
  perf: <svg width="16" height="16" viewBox="0 0 16 16"><circle cx="8" cy="8" r="7.500" fill="#0d5fae" /><circle cx="8" cy="8" r="5" fill="#1470c4" /><path d="M7 9l2 1 3-3" stroke="#0a3f7a" fill="none" strokeWidth="1.300" /></svg>,
  trust: <Icon><path d="M1 1h8v5H1z" fill="#b9c8e0" /><path d="M3 0h5v3H3z" fill="#3f6bb0" /><path d="M1 8h8v5H1z" fill="#e0d95a" /><path d="M4 4h6l2 4" stroke="#dfe7f3" /><path d="M6 10l3 3 4-5" stroke="#67c23a" strokeWidth="2" /></Icon>,
  full: <Icon><path d="M1 2h12v10H1z" stroke="#c4c4c4" strokeWidth="1.200" /><path d="M8 7l3-3M11 7V4H8M6 7l-3 3M3 7v3h3" stroke="#c4c4c4" strokeWidth="1.200" /></Icon>,
  menu: <Icon><path d="M1 2.500h12M1 7h12M1 11.500h12" stroke="#d0d0d0" strokeWidth="1.700" /></Icon>,
}
const Annot = ({ color, mark }) => (
  <Icon>
    <path d="M5 1h4v5l5 7H9.500L7 10.500 4.500 13H0l5-7z" fill={color} />
    {mark === 'ring' && <circle cx="9.500" cy="3" r="2.300" stroke={color} strokeWidth="1.300" fill="#474747" />}
    {mark === 'bolt' && <path d="M9 0v5M7 3h6l-2-2" stroke={color} strokeWidth="1.300" />}
  </Icon>
)

const caretButton = (key, w) => iconButton(key, <Caret />, w)

const Status = () => (
  <StatusBar>
    <Cell><StatusText $w={40}>MODEL</StatusText></Cell>
    <Cell>{iconButton('grid', status.grid, 19)}{iconButton('snap', status.snap, 20)}{caretButton('snap list', 14)}</Cell>
    <Cell>{iconButton('ortho', status.ortho, 20)}{iconButton('polar', status.polar, 20)}{caretButton('polar list', 10)}{iconButton('isometric', status.iso, 25)}{caretButton('isometric list', 9)}</Cell>
    <Cell>{iconButton('tracking', status.track, 20)}{iconButton('osnap', status.osnap, 21)}{caretButton('osnap list', 12)}</Cell>
    <Cell>
      {iconButton('annotation visibility', <Annot color={BLUE} mark="ring" />, 21)}
      {iconButton('annotation autoscale', <Annot color="#c0c0c0" mark="bolt" />, 20)}
      {iconButton('annotation scale', <Annot color="#c0c0c0" />, 20)}
      <StatusText $w={47} $bold>1:2 / 50%</StatusText>{caretButton('scale list', 11)}
    </Cell>
    <Cell>{iconButton('workspace', status.gear, 20)}<StatusText $w={107} $bold>Drafting &amp; Annotation</StatusText>{caretButton('workspace list', 11)}</Cell>
    <Cell>{iconButton('monitor', status.plus, 21)}</Cell>
    <Cell>{iconButton('isolate', status.isolate, 21)}</Cell>
    <Cell>{iconButton('hardware', status.perf, 22)}</Cell>
    <Cell>{iconButton('trusted', status.trust, 20)}</Cell>
    <Cell>{iconButton('clean screen', status.full, 21)}{iconButton('customization', status.menu, 20)}</Cell>
  </StatusBar>
)

export default function App() {
  return (
    <Page>
      <GlobalStyle />
      <Top />
      <RibbonBar />
      <Work>
        <Canvas>
          <Plan />
          <ViewLabel>[−][Top][2D Wireframe]</ViewLabel>
          <DocButtons>
            {iconButton('minimize drawing', <svg width="9" height="9"><path d="M1 6.500h8" stroke="#eee" strokeWidth="2" /></svg>, 16)}
            {iconButton('restore drawing', <svg width="9" height="9" fill="none" stroke="#eee" strokeWidth="1.300"><path d="M1 3h5v5H1zM3 3V1h5v5H6" /></svg>, 16)}
            {iconButton('close drawing', <svg width="9" height="9" stroke="#eee" strokeWidth="1.800"><path d="M1.500 1.500l6 6M7.500 1.500l-6 6" /></svg>, 16)}
          </DocButtons>
          <Cube />
          <Wcs>WCS <svg width="6" height="3"><path d="M0 1.500h6" stroke="#b5b7bb" /></svg></Wcs>
          <Navigation />
          <AngleTip>15°</AngleTip>
          <PromptTip>
            Specify next point or
            <svg width="9" height="9" viewBox="0 0 9 9" fill="none"><path d="M.5.500h8v8h-8z" fill="#eef" stroke="#2c2f8a" /><path d="M4.500 2v3M3 3.500h3M2.500 6.500h4" stroke="#222" /></svg>
          </PromptTip>
          <LengthInput defaultValue="300" aria-label="Length" />
        </Canvas>
        <Edge />
      </Work>
      <Bottom>
        <LayoutTabs>
          <LayoutTab $w={48} $active>Model</LayoutTab>
          <LayoutTab $w={52}>Layout1</LayoutTab>
          <LayoutTab $w={52}>Layout2</LayoutTab>
          <LayoutTab $w={20} aria-label="New layout"><svg width="20" height="13"><path d="M11 3.500v7M7.500 7h7" stroke="#ddd" strokeWidth="1.500" /></svg></LayoutTab>
        </LayoutTabs>
        <Status />
      </Bottom>
    </Page>
  )
}
